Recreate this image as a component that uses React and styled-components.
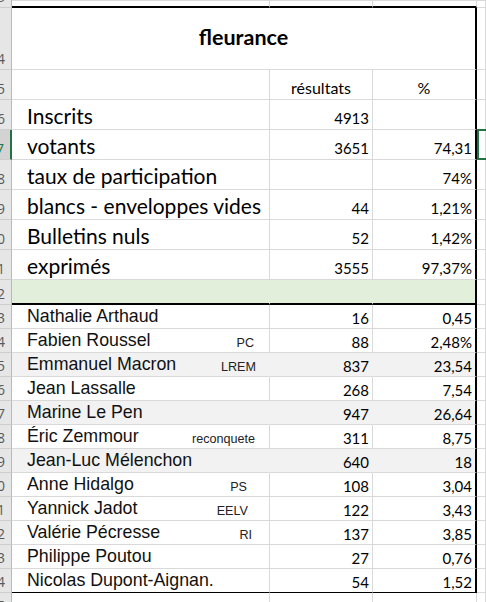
import React from 'react';
import styled, { createGlobalStyle } from 'styled-components';

const GlobalStyle = createGlobalStyle`
  html, body {
    margin: 0;
    padding: 0;
    background: #fff;
    overflow: hidden;
  }
`;

const GRID = '#d9d9d9';
const HEAD_BG = '#e6e6e6';
const EXCEL_GREEN = '#217346';

const Sheet = styled.div`
  width: 486px;
  height: 602px;
  overflow: hidden;
  background: #fff;
`;

const Row = styled.div`
  display: grid;
  grid-template-columns: 12px 258px 103px 104px 1fr;
  height: ${p => p.$h}px;
`;

const RowHead = styled.div`
  box-sizing: border-box;
  display: flex;
  justify-content: flex-end;
  align-items: flex-end;
  overflow: hidden;
  white-space: nowrap;
  padding: 0 6px 3px 0;
  background: ${p => (p.$active ? '#d3d3d3' : HEAD_BG)};
  border-right: ${p => (p.$active ? `2px solid ${EXCEL_GREEN}` : '1px solid #b9b9b9')};
  border-bottom: 1px solid #cdcdcd;
  color: ${p => (p.$active ? EXCEL_GREEN : '#5a5a5a')};
  font-family: 'Open Sans', sans-serif;
  font-size: 14px;
  line-height: 1;
`;

const Cell = styled.div`
  box-sizing: border-box;
  position: relative;
  display: flex;
  align-items: flex-end;
  justify-content: ${p => (p.$align === 'right' ? 'flex-end' : p.$align === 'center' ? 'center' : 'flex-start')};
  overflow: hidden;
  white-space: nowrap;
  padding: 0 3px ${p => p.$pb ?? 3}px ${p => p.$pl ?? 3}px;
  background: ${p => p.$fill || '#fff'};
  border-right: ${p => (p.$edge ? '2px solid #000' : `1px solid ${p.$fill || GRID}`)};
  border-bottom: ${p => (p.$rule ? p.$rule : `1px solid ${GRID}`)};
  border-top: ${p => (p.$top ? `1px solid ${GRID}` : 'none')};
  color: #000;
`;

const Selected = styled(Cell)`
  overflow: visible;
  &::after {
    content: '';
    position: absolute;
    top: -1px;
    bottom: -1px;
    left: 0;
    right: -6px;
    border: 2px solid ${EXCEL_GREEN};
  }
`;

const TitleCell = styled(Cell)`
  grid-column: 2 / 5;
  align-items: center;
  justify-content: center;
  padding: 0 0 2px 0;
  font-family: Lato, 'Open Sans', sans-serif;
  font-weight: 700;
  font-size: 21.5px;
  line-height: 1;
`;

const Label = styled.span`
  font-family: Lato, 'Open Sans', sans-serif;
  font-size: 21px;
  line-height: 1;
`;

const Num = styled.span`
  font-family: Lato, 'Open Sans', sans-serif;
  font-size: ${p => p.$size || 15}px;
  line-height: 1;
`;

const Name = styled.span`
  font-family: 'Liberation Sans', Arial, sans-serif;
  font-size: 17.8px;
  line-height: 1;
  color: #111;
`;

const Party = styled.span`
  margin-left: auto;
  margin-right: ${p => p.$gap}px;
  font-family: 'Liberation Sans', Arial, sans-serif;
  font-size: 12.6px;
  line-height: 1;
  color: #222;
`;

const summary = [
  { n: 6, label: 'Inscrits', count: '4913', pct: '' },
  { n: 7, label: 'votants', count: '3651', pct: '74,31', active: true },
  { n: 8, label: 'taux de participation', count: '', pct: '74%' },
  { n: 9, label: 'blancs - enveloppes vides', count: '44', pct: '1,21%' },
  { n: 10, label: 'Bulletins nuls', count: '52', pct: '1,42%' },
  { n: 11, label: 'exprimés', count: '3555', pct: '97,37%' },
];

const candidates = [
  { name: 'Nathalie Arthaud', votes: '16', pct: '0,45' },
  { name: 'Fabien Roussel', party: 'PC', gap: 15, votes: '88', pct: '2,48%' },
  { name: 'Emmanuel Macron', party: 'LREM', gap: 13, votes: '837', pct: '23,54', shade: true },
  { name: 'Jean Lassalle', votes: '268', pct: '7,54' },
  { name: 'Marine Le Pen', votes: '947', pct: '26,64', shade: true },
  { name: 'Éric Zemmour', party: 'reconquete', gap: 14, votes: '311', pct: '8,75' },
  { name: 'Jean-Luc Mélenchon', votes: '640', pct: '18', shade: true },
  { name: 'Anne Hidalgo', party: 'PS', gap: 22, votes: '108', pct: '3,04' },
  { name: 'Yannick Jadot', party: 'EELV', gap: 21, votes: '122', pct: '3,43' },
  { name: 'Valérie Pécresse', party: 'RI', gap: 17, votes: '137', pct: '3,85' },
  { name: 'Philippe Poutou', votes: '27', pct: '0,76' },
  { name: 'Nicolas Dupont-Aignan.', votes: '54', pct: '1,52' },
];

const STRIPE = '#f2f2f2';
const BAND = '#e2efda';

export default function App() {
  return (
    <Sheet>
      <GlobalStyle />

      <Row $h={8}>
        <RowHead>3</RowHead>
        <Cell $top $rule="2px solid #000" />
        <Cell $top $rule="2px solid #000" />
        <Cell $top $rule="2px solid #000" />
        <Cell $top />
      </Row>

      <Row $h={62}>
        <RowHead>4</RowHead>
        <TitleCell $edge>fleurance</TitleCell>
        <Cell />
      </Row>

      <Row $h={30}>
        <RowHead>5</RowHead>
        <Cell />
        <Cell $align="center"><Num $size={16}>résultats</Num></Cell>
        <Cell $align="center" $edge><Num $size={16}>%</Num></Cell>
        <Cell />
      </Row>

      {summary.map(r => {
        const Last = r.active ? Selected : Cell;
        return (
          <Row $h={30} key={r.n}>
            <RowHead $active={r.active}>{r.n}</RowHead>
            <Cell $pl={15}><Label>{r.label}</Label></Cell>
            <Cell $align="right"><Num>{r.count}</Num></Cell>
            <Cell $align="right" $edge><Num>{r.pct}</Num></Cell>
            <Last />
          </Row>
        );
      })}

      <Row $h={25}>
        <RowHead>12</RowHead>
        <Cell $fill={BAND} $rule="2px solid #000" />
        <Cell $fill={BAND} $rule="2px solid #000" />
        <Cell $fill={BAND} $rule="2px solid #000" $edge />
        <Cell />
      </Row>

      {candidates.map((c, i) => {
        const last = i === candidates.length - 1;
        const rule = last ? '1px solid #000' : undefined;
        const fill = c.shade ? STRIPE : undefined;
        return (
          <Row $h={24} key={c.name}>
            <RowHead>{13 + i}</RowHead>
            <Cell $pl={15} $pb={2} $fill={fill} $rule={rule}>
              <Name>{c.name}</Name>
              {c.party && <Party $gap={c.gap - 3}>{c.party}</Party>}
            </Cell>
            <Cell $align="right" $pb={2} $fill={fill} $rule={rule}><Num>{c.votes}</Num></Cell>
            <Cell $align="right" $pb={2} $fill={fill} $rule={rule} $edge><Num>{c.pct}</Num></Cell>
            <Cell />
          </Row>
        );
      })}

      <Row $h={24}>
        <RowHead>25</RowHead>
        <Cell />
        <Cell />
        <Cell />
        <Cell />
      </Row>
    </Sheet>
  );
}
